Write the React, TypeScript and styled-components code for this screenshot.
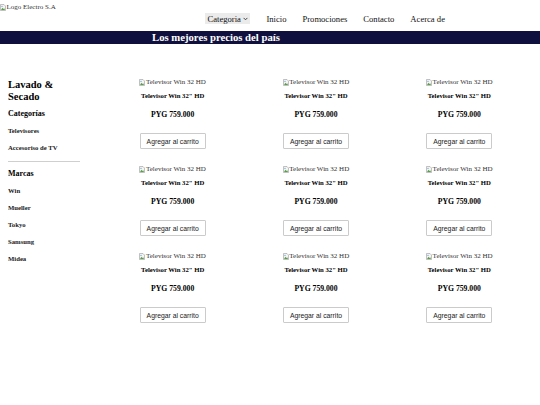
import React from "react";
import styled, { createGlobalStyle } from "styled-components";

const Global = createGlobalStyle`
  html, body { margin: 0; padding: 0; background: #fff; }
  body { font-family: "Liberation Serif", "Times New Roman", serif; color: #000; }
`;

const Header = styled.header`
  padding-top: 3px;
`;

const AltImage = styled.span<{ $size: number }>`
  display: flex;
  align-items: center;
  gap: 0.5px;
  font-size: ${(p) => p.$size}px;
  line-height: 8px;
  height: 8px;
  color: #333;
  white-space: nowrap;
`;

const NavList = styled.ul`
  display: flex;
  align-items: center;
  gap: 16px;
  list-style: none;
  margin: 2px 0 0 205px;
  padding: 0;
  font-size: 8.6px;
  line-height: 10px;
`;

const NavItem = styled.li<{ $active?: boolean }>`
  display: flex;
  align-items: center;
  gap: 2px;
  padding: ${(p) => (p.$active ? "0.5px 2.5px" : "0")};
  background: ${(p) => (p.$active ? "#ebebeb" : "transparent")};
  color: #111;
`;

const Banner = styled.div`
  margin-top: 7px;
  height: 13px;
  background: #10103e;
  color: #fff;
  font-weight: bold;
  font-size: 10.7px;
  line-height: 13px;
  padding-left: 152px;
  white-space: nowrap;
`;

const Main = styled.main`
  display: flex;
  align-items: flex-start;
  gap: 21px;
  padding: 0 9px 0 8px;
  margin-top: 34px;
`;

const Sidebar = styled.aside`
  width: 72px;
  flex: none;
  padding-top: 1px;
`;

const SideTitle = styled.h2`
  margin: 0;
  font-size: 10.5px;
  line-height: 12px;
  font-weight: bold;
`;

const SideHeading = styled.h3<{ $top: number }>`
  margin: ${(p) => p.$top}px 0 0;
  font-size: 8px;
  line-height: 10px;
  font-weight: bold;
`;

const SideList = styled.ul`
  list-style: none;
  margin: 8px 0 0;
  padding: 0;
  display: flex;
  flex-direction: column;
  gap: 9px;
`;

const SideLink = styled.li`
  font-size: 6.7px;
  line-height: 8px;
  font-weight: bold;
  color: #222;
  white-space: nowrap;
`;

const Rule = styled.hr`
  margin: 8.5px 0 0;
  border: 0;
  border-top: 1px solid #cfcfcf;
`;

const Grid = styled.section`
  flex: 1;
  display: grid;
  grid-template-columns: repeat(3, 1fr);
  row-gap: 16px;
`;

const Card = styled.div`
  display: flex;
  flex-direction: column;
  align-items: center;
`;

const Title = styled.div`
  margin-top: 6px;
  font-size: 6.7px;
  line-height: 8px;
  font-weight: bold;
  white-space: nowrap;
`;

const Price = styled.div`
  margin-top: 10px;
  font-size: 7.7px;
  line-height: 9px;
  font-weight: bold;
`;

const CartButton = styled.button`
  margin-top: 14px;
  height: 16px;
  padding: 0 6px;
  background: #fff;
  border: 1px solid #cbcbcb;
  border-radius: 1px;
  font-family: "Liberation Sans", Arial, sans-serif;
  font-size: 6.8px;
  color: #222;
  white-space: nowrap;
  cursor: pointer;
`;

const BrokenIcon = () => (
  <svg width="6" height="7" viewBox="0 0 6 7" aria-hidden="true">
    <path d="M0.5 0.5 H4 L5.5 2 V6.5 H0.5 Z" fill="#f4f4f4" stroke="#9a9a9a" strokeWidth="0.6" />
    <path d="M1 6 L2.4 3.8 L3.4 5 L4.2 4.2 L5 6 Z" fill="#5aa04a" />
    <circle cx="2" cy="2.4" r="0.6" fill="#6d9fd8" />
  </svg>
);

const Chevron = () => (
  <svg width="5" height="4" viewBox="0 0 5 4" aria-hidden="true">
    <path d="M0.6 0.9 L2.5 2.8 L4.4 0.9" fill="none" stroke="#333" strokeWidth="0.9" />
  </svg>
);

const navItems = ["Inicio", "Promociones", "Contacto", "Acerca de"];
const categories = ["Televisores", "Accesoriso de TV"];
const brands = ["Win", "Mueller", "Tokyo", "Samsung", "Midea"];
const products = Array.from({ length: 9 }, (_, i) => ({
  id: i,
  alt: "Televisor Win 32 HD",
  name: "Televisor Win 32\" HD",
  price: "PYG 759.000",
}));

export default function App() {
  return (
    <>
      <Global />
      <Header>
        <AltImage $size={7}>
          <BrokenIcon />
          Logo Electro S.A
        </AltImage>
        <nav>
          <NavList>
            <NavItem $active>
              Categoria <Chevron />
            </NavItem>
            {navItems.map((n) => (
              <NavItem key={n}>{n}</NavItem>
            ))}
          </NavList>
        </nav>
        <Banner>Los mejores precios del país</Banner>
      </Header>
      <Main>
        <Sidebar>
          <SideTitle>Lavado &amp; Secado</SideTitle>
          <SideHeading $top={6}>Categorías</SideHeading>
          <SideList>
            {categories.map((c) => (
              <SideLink key={c}>{c}</SideLink>
            ))}
          </SideList>
          <Rule />
          <SideHeading $top={7}>Marcas</SideHeading>
          <SideList>
            {brands.map((b) => (
              <SideLink key={b}>{b}</SideLink>
            ))}
          </SideList>
        </Sidebar>
        <Grid>
          {products.map((p) => (
            <Card key={p.id}>
              <AltImage $size={7}>
                <BrokenIcon />
                {p.alt}
              </AltImage>
              <Title>{p.name}</Title>
              <Price>{p.price}</Price>
              <CartButton>Agregar al carrito</CartButton>
            </Card>
          ))}
        </Grid>
      </Main>
    </>
  );
}
